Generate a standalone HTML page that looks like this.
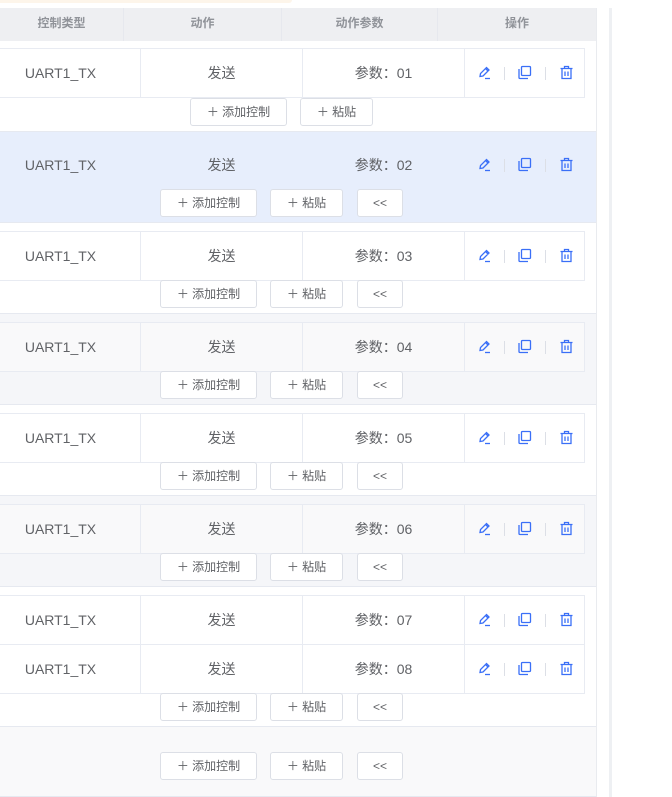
<!DOCTYPE html>
<html><head><meta charset="utf-8"><style>
*{box-sizing:border-box;margin:0;padding:0}
body{width:672px;height:797px;overflow:hidden;background:#fff;position:relative;font-family:"Liberation Sans","Noto Sans CJK SC",sans-serif;color:#606266}
.a{position:absolute}
.hd{top:8px;left:0;width:596px;height:34px;background:#eeeff2;border-bottom:1px solid #e4e6eb}
.hd div{position:absolute;top:0;height:33px;line-height:30px;font-size:12px;font-weight:bold;color:#909399;text-align:center;border-right:1px solid #e6e8ee}
.blk{left:0;width:596px;border-bottom:1px solid #e6e9f0}
.row{left:-20px;width:605px;height:50px;border:1px solid #e8ebf2;font-size:14px}
.row div{position:absolute;top:0;height:48px;line-height:48px;text-align:center;border-right:1px solid #e8ebf2}
.btn{position:absolute;height:28px;border:1px solid #dcdfe6;border-radius:3px;background:#fff;font-size:12px;line-height:26px;text-align:center;color:#606266}
.ic{position:absolute;top:16px}
.sep{position:absolute;top:18px;width:1px;height:13px;background:#dcdfe6}
</style></head><body>
<div class="a" style="left:0;top:0;width:292px;height:3px;background:#fdf5ea;border-radius:0 0 3px 0"></div>
<div class="a hd">
<div style="left:0;width:124px">控制类型</div>
<div style="left:124px;width:158px">动作</div>
<div style="left:282px;width:156px">动作参数</div>
<div style="left:438px;width:158px;border:0">操作</div>
</div>
<div class="a" style="left:596px;top:8px;width:1px;height:789px;background:#e9ebef"></div>
<div class="a" style="left:609px;top:8px;width:3px;height:789px;background:#eef0f3"></div>

<div id="c"></div>
<script>
var B=[[41,91,'#fff',[48],98,1,'#fff'],[132,91,'#e7eefc',[140],189,0,'#e7eefc'],[223,91,'#fff',[231],280,0,'#fff'],[314,91,'#f5f6f9',[322],371,0,'#f9f9fa'],[405,91,'#fff',[413],462,0,'#fff'],[496,91,'#f5f6f9',[504],553,0,'#f9f9fa'],[587,140,'#fff',[595,644],693,0,'#fff'],[727,70,'#f9f9fa',[],752,0,'#fff']];
var pen='<svg class="ic" style="left:12px" width="15" height="15" viewBox="0 0 15 15" fill="none" stroke="#3a6ff7" stroke-width="1.3"><path d="M3 11.5 L3.5 8.5 L9.5 2.5 L12 5 L6 11 Z M8.5 3.5 L11 6"/><path d="M8 13.5 H13"/></svg>';
var cp='<svg class="ic" style="left:52px" width="15" height="15" viewBox="0 0 15 15" fill="none" stroke="#3a6ff7" stroke-width="1.3"><rect x="4.5" y="1.5" width="9" height="9" rx="1"/><path d="M2 4 V12.5 a1 1 0 0 0 1 1 H11"/></svg>';
var tr='<svg class="ic" style="left:94px" width="15" height="15" viewBox="0 0 15 15" fill="none" stroke="#3a6ff7" stroke-width="1.3"><path d="M1.5 3.5 H13.5 M5.5 3.5 V1.5 H9.5 V3.5 M3 3.5 V13.5 H12 V3.5 M6 6.5 V11 M9 6.5 V11"/></svg>';
var h='';var n=1;
B.forEach(function(b){
 h+='<div class="a blk" style="top:'+b[0]+'px;height:'+b[1]+'px;background:'+b[2]+'"></div>';
 b[3].forEach(function(t){
  var brd=b[2]=='#e7eefc'?'transparent':'#e8ebf2';
  h+='<div class="a row" style="top:'+t+'px;background:'+b[6]+';border-color:'+brd+'"><div style="left:0;width:160px;border-color:'+brd+'">UART1_TX</div><div style="left:160px;width:162px;border-color:'+brd+'">发送</div><div style="left:322px;width:162px;border-color:'+brd+';padding-left:0px">参数：0'+(n++)+'</div><div style="left:484px;width:120px;border:0">'+pen+'<span class="sep" style="left:39px"></span>'+cp+'<span class="sep" style="left:80px"></span>'+tr+'</div></div>';
 });
 var y=b[4];
 if(b[5]){h+='<div class="btn" style="left:190px;top:'+y+'px;width:97px">＋ 添加控制</div><div class="btn" style="left:300px;top:'+y+'px;width:73px">＋ 粘贴</div>';}
 else{h+='<div class="btn" style="left:160px;top:'+y+'px;width:97px">＋ 添加控制</div><div class="btn" style="left:270px;top:'+y+'px;width:73px">＋ 粘贴</div><div class="btn" style="left:357px;top:'+y+'px;width:46px">&lt;&lt;</div>';}
});
document.getElementById('c').innerHTML=h;
</script>
</body></html>
